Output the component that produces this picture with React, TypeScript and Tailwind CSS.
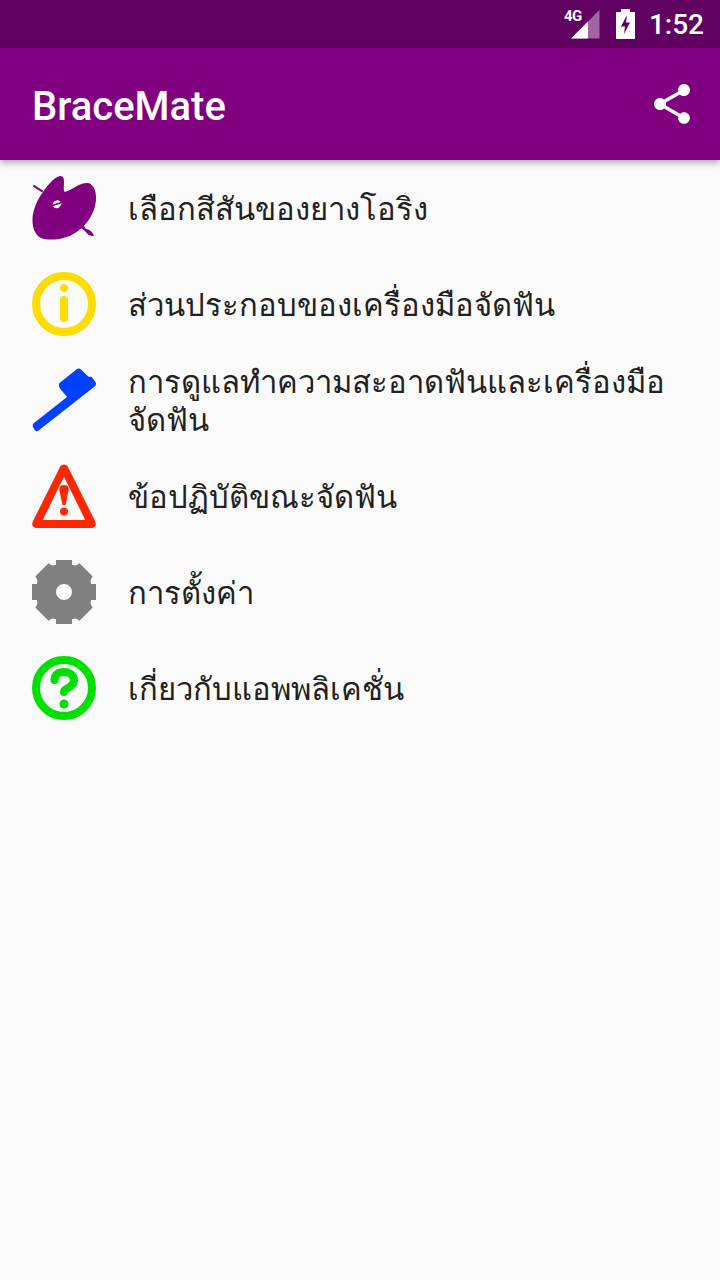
const items = [
  { label: "เลือกสีสันของยางโอริง", icon: <PaletteIcon /> },
  { label: "ส่วนประกอบของเครื่องมือจัดฟัน", icon: <InfoIcon /> },
  { label: "การดูแลทำความสะอาดฟันและเครื่องมือจัดฟัน", icon: <BrushIcon /> },
  { label: "ข้อปฏิบัติขณะจัดฟัน", icon: <WarningIcon /> },
  { label: "การตั้งค่า", icon: <GearIcon /> },
  { label: "เกี่ยวกับแอพพลิเคชั่น", icon: <HelpIcon /> },
];

function PaletteIcon() {
  return (
    <svg width="64" height="64" viewBox="0 0 64 64">
      <path d="M1.3 9.700L10.700 15.700" stroke="#800080" strokeWidth="2" />
      <path d="M46 50L53 55Q57 61 62 59.700Q60 54 54 53L50 47Z" fill="#800080" />
      <path
        d="M28 0C32 0 32 3 32 7C32 11 31 14 33 16C38 15 47 7 55 7C61 7 64 14 64 22C64 30 61 38 56 45C50 53 41 60 31 62C24 64 14 64 9 62C3 59 .5 52 .5 44C.5 36 4 26 9 19C14 11 22 1 28 0Z"
        fill="#800080"
      />
      <ellipse cx="25" cy="28.200" rx="4.500" ry="3.800" transform="rotate(-25 25 28.200)" fill="#fafafa" />
      <path d="M19 30L31 26" stroke="#800080" strokeWidth="1.500" />
    </svg>
  );
}

function InfoIcon() {
  return (
    <svg width="64" height="64" viewBox="0 0 64 64">
      <circle cx="32" cy="32" r="28" fill="none" stroke="#ffdd00" strokeWidth="8" />
      <circle cx="32" cy="16" r="4" fill="#ffdd00" />
      <rect x="28" y="24" width="8" height="26" rx="4" fill="#ffdd00" />
    </svg>
  );
}

function BrushIcon() {
  return (
    <svg width="64" height="64" viewBox="0 0 64 64">
      <path
        d="M27.500 15L45 1Q47 0 49 1.500L56.500 8.700H59.500L63.500 14Q65 17 62 19L6.500 62.500Q4.500 64 3 62.500L1 59Q0 57 2 55L35 29L28 20.500Q26 17 27.500 15Z"
        fill="#0040ff"
      />
    </svg>
  );
}

function WarningIcon() {
  return (
    <svg width="64" height="64" viewBox="0 0 64 64">
      <path
        fillRule="evenodd"
        d="M28.500 2Q32 -1 35.500 2L63 57Q65.500 63 60 64H4Q-1.500 63 1 57ZM32 12.700L10.700 56H53.300Z"
        fill="#ff2600"
      />
      <path d="M27.300 26Q27 21 32 21Q37 21 36.700 26L33.500 41H30.500Z" fill="#ff2600" />
      <circle cx="32" cy="47.500" r="4" fill="#ff2600" />
    </svg>
  );
}

function GearIcon() {
  return (
    <svg width="64" height="64" viewBox="0 0 64 64">
      <path
        fillRule="evenodd"
        d="M24 0H40V5L44 5.500L47.500 3.300L60.700 16.500L58.500 20L59 24H64V40H59L58.500 44L60.700 47.500L47.500 60.700L44 58.500L40 59V64H24V59L20 58.500L16.500 60.700L3.300 47.500L5.500 44L5 40H0V24H5L5.500 20L3.300 16.500L16.500 3.300L20 5.500L24 5ZM32 24A8 8 0 1 0 32 40A8 8 0 1 0 32 24Z"
        fill="#808080"
      />
    </svg>
  );
}

function HelpIcon() {
  return (
    <svg width="64" height="64" viewBox="0 0 64 64">
      <circle cx="32" cy="32" r="28" fill="none" stroke="#00e000" strokeWidth="8" />
      <path
        d="M22.500 24C22.500 18.500 26.500 16 32 16C38 16 42 19.500 42 24.500C42 29 38 31 35 32.500C33 33.500 32 35 32 36"
        fill="none"
        stroke="#00e000"
        strokeWidth="8"
        strokeLinecap="round"
      />
      <circle cx="32" cy="48" r="4.500" fill="#00e000" />
    </svg>
  );
}

export default function App() {
  return (
    <div className="h-[1280px] w-[720px] overflow-hidden bg-[#fafafa] font-['Roboto',sans-serif]">
      {/* status bar */}
      <div className="flex h-12 items-center justify-end bg-[#600060] pr-4 text-white">
        <div className="relative mr-4 h-[28px] w-[36px]">
          <span className="absolute -top-[2px] left-0 text-[15px] leading-[16px] font-bold tracking-[-0.5px]">4G</span>
          <svg className="absolute top-0 left-0" width="36" height="30" viewBox="0 0 36 30">
            <path d="M7 28.500L35.500 0V28.500Z" fill="#ffffff" fillOpacity="0.4" />
            <path d="M7 28.500L24 11.500V28.500Z" fill="#ffffff" />
          </svg>
        </div>
        <svg className="mr-[14px]" width="19" height="30" viewBox="0 0 19 30">
          <path d="M5 0H14V3H19V30H0V3H5Z" fill="#ffffff" />
          <path d="M11 6L5 17.500H9L8 25L14 13.500H10Z" fill="#600060" />
        </svg>
        <span className="pt-[2px] text-[28px] leading-none font-medium">1:52</span>
      </div>

      {/* app bar */}
      <div className="relative flex h-[112px] items-center justify-between bg-[#800080] pr-6 pl-8 shadow-[0_3px_6px_rgba(0,0,0,0.3)]">
        <h1 className="pt-[6px] text-[40px] font-medium text-white">BraceMate</h1>
        <svg width="48" height="48" viewBox="0 0 24 24" fill="#ffffff">
          <path d="M18 16.080c-.76 0-1.440.3-1.960.77L8.910 12.700c.05-.23.09-.46.09-.7s-.04-.47-.09-.7l7.050-4.110c.54.5 1.250.81 2.040.81 1.660 0 3-1.340 3-3s-1.340-3-3-3-3 1.340-3 3c0 .24.04.47.09.7L8.040 9.810C7.500 9.310 6.790 9 6 9c-1.660 0-3 1.340-3 3s1.340 3 3 3c.79 0 1.500-.31 2.040-.81l7.120 4.160c-.05.21-.08.43-.08.65 0 1.610 1.310 2.920 2.920 2.920 1.610 0 2.920-1.310 2.920-2.920s-1.310-2.920-2.920-2.920z" />
        </svg>
      </div>

      {/* menu */}
      <ul>
        {items.map((item) => (
          <li key={item.label} className="flex h-24 items-center pr-8 pl-8">
            <span className="mr-8 shrink-0">{item.icon}</span>
            <span className="pt-[3px] text-[31px] leading-[38px] text-[#212121]">{item.label}</span>
          </li>
        ))}
      </ul>
    </div>
  );
}
